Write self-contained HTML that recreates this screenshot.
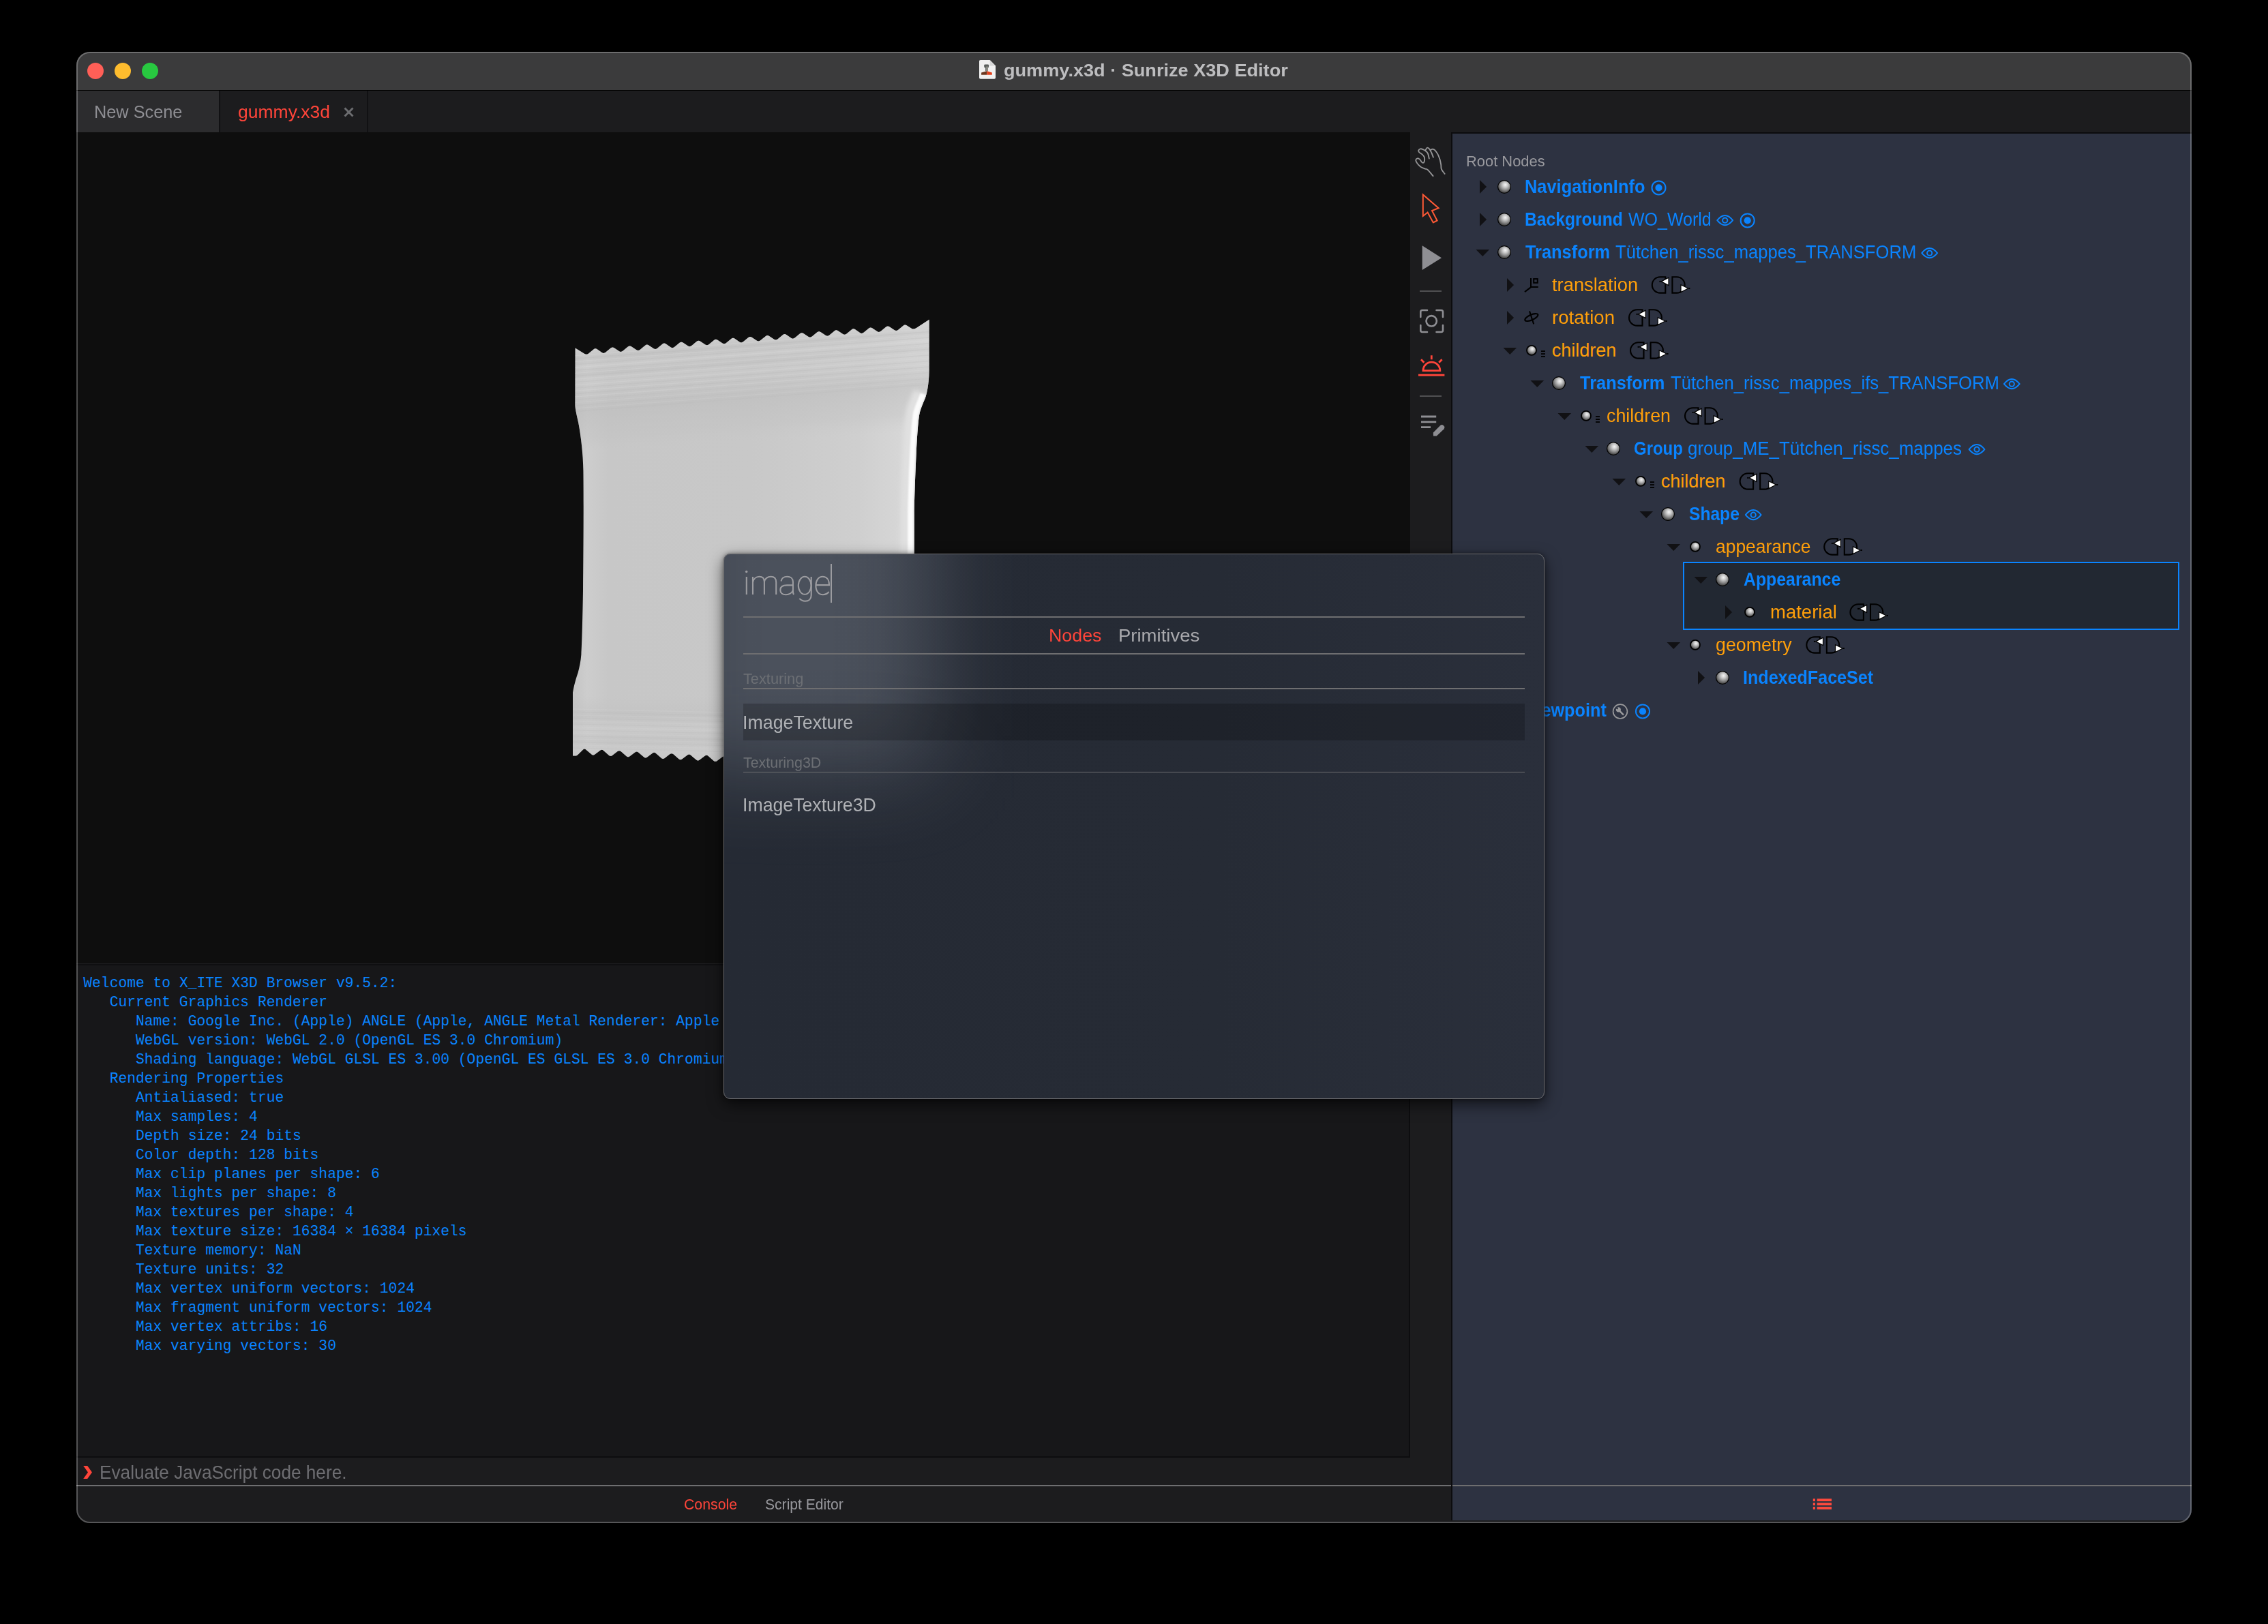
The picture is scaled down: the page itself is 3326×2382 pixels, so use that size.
<!DOCTYPE html>
<html><head><meta charset="utf-8">
<style>
html,body{margin:0;padding:0;background:#000;width:3326px;height:2382px;overflow:hidden;}
*{box-sizing:border-box;}
.a{position:absolute;display:block;}
.t{position:absolute;white-space:pre;line-height:1;}
#win{position:absolute;left:112px;top:76px;width:3102px;height:2158px;border-radius:20px;overflow:hidden;background:#1c1c1e;}
#winborder{position:absolute;left:112px;top:76px;width:3102px;height:2158px;border-radius:20px;border:2px solid rgba(255,255,255,0.26);pointer-events:none;}
</style></head><body>
<div id="win">

<div class="a" style="left:0.00px;top:0.00px;width:3102.00px;height:56.00px;background:#3b3b3c;"></div>
<div class="a" style="left:0.00px;top:56.00px;width:3102.00px;height:1.00px;background:#000;"></div>
<div class="a" style="left:15.75px;top:15.75px;width:24.50px;height:24.50px;border-radius:50%;background:#ff5f57;"></div>
<div class="a" style="left:55.75px;top:15.75px;width:24.50px;height:24.50px;border-radius:50%;background:#febc2e;"></div>
<div class="a" style="left:95.75px;top:15.75px;width:24.50px;height:24.50px;border-radius:50%;background:#28c840;"></div>
<svg class="a" style="left:1320.00px;top:8.00px;" width="32.00" height="36.00" viewBox="1432.00 84.00 32.00 36.00">
<path d="M1437.8 88 H1451.6 L1460 96.4 V113.9 A1.8 1.8 0 0 1 1458.2 115.7 H1437.8 A1.8 1.8 0 0 1 1436 113.9 V89.8 A1.8 1.8 0 0 1 1437.8 88 Z" fill="#f0f0f0"/>
<path d="M1451.6 88 V96.4 H1460 Z" fill="#d6d6d6"/>
<path d="M1443.1 95.5 Q1443.5 94.3 1445 94.4 L1449 94.4 Q1450.3 94.5 1450.2 96 L1449.8 99 L1448.8 99.4 V104.3 H1445.1 V99.4 L1443.3 98.8 Z" fill="#5c605e"/>
<rect x="1446.2" y="97.5" width="2.6" height="6.8" fill="#8e8f88"/>
<path d="M1439.1 106.6 L1447.3 104.3 V109.8 H1439.1 Z" fill="#6b3820"/>
<path d="M1447.3 104.3 L1454.8 106.6 V109.8 H1447.3 Z" fill="#e2401c"/>
</svg>
<div class="t" style="left:1359.98px;top:13.57px;font-family:'Liberation Sans',sans-serif;font-size:26.5px;font-weight:bold;color:#bdbdbf;transform:scaleX(1.0230);transform-origin:0 0;">gummy.x3d · Sunrize X3D Editor</div>
<div class="a" style="left:0.00px;top:57.00px;width:3102.00px;height:61.00px;background:#1c1c1e;"></div>
<div class="a" style="left:0.00px;top:57.00px;width:209.00px;height:61.00px;background:#2c2c2e;"></div>
<div class="a" style="left:209.00px;top:57.00px;width:1.50px;height:61.00px;background:#111113;"></div>
<div class="a" style="left:426.00px;top:57.00px;width:2.00px;height:61.00px;background:#111113;"></div>
<div class="t" style="left:25.75px;top:74.89px;font-family:'Liberation Sans',sans-serif;font-size:26px;font-weight:normal;color:#8e8e93;transform:scaleX(0.9732);transform-origin:0 0;">New Scene</div>
<div class="t" style="left:236.98px;top:74.89px;font-family:'Liberation Sans',sans-serif;font-size:26px;font-weight:normal;color:#ff453a;transform:scaleX(1.0193);transform-origin:0 0;">gummy.x3d</div>
<svg class="a" style="left:391.00px;top:80.00px;" width="17.00" height="17.00" viewBox="503.00 156.00 17.00 17.00"><path d="M505.5 158.5 L517.5 170.5 M517.5 158.5 L505.5 170.5" stroke="#6c6d70" stroke-width="2.9" stroke-linecap="butt"/></svg>
<div class="a" style="left:0.00px;top:118.00px;width:1956.00px;height:1219.00px;background:#0e0e0e;"></div>
<svg class="a" style="left:713.00px;top:379.00px;" width="555.00" height="680.00" viewBox="825.00 455.00 555.00 680.00">
<defs>
<clipPath id="bagclip"><path d="M843.60 510.40 L856.95 518.69 Q860.28 520.77 862.81 518.69 L870.38 512.47 Q872.90 510.40 875.42 512.09 L882.99 517.15 Q885.51 518.83 888.04 516.76 L895.61 510.54 Q898.13 508.47 900.65 510.15 L908.22 515.21 Q910.75 516.90 913.27 514.83 L920.84 508.61 Q923.36 506.53 925.88 508.22 L933.45 513.28 Q935.97 514.97 938.50 512.89 L946.07 506.67 Q948.59 504.60 951.11 506.29 L958.68 511.35 Q961.20 513.03 963.73 510.96 L971.30 504.74 Q973.82 502.67 976.34 504.35 L983.91 509.41 Q986.43 511.10 988.96 509.03 L996.53 502.81 Q999.05 500.73 1001.57 502.42 L1009.14 507.48 Q1011.66 509.17 1014.19 507.09 L1021.76 500.87 Q1024.28 498.80 1026.80 500.49 L1034.37 505.55 Q1036.89 507.23 1039.42 505.16 L1046.99 498.94 Q1049.51 496.87 1052.03 498.56 L1059.60 503.62 Q1062.12 505.30 1064.65 503.23 L1072.22 497.01 Q1074.74 494.94 1077.26 496.62 L1084.83 501.68 Q1087.36 503.37 1089.88 501.30 L1097.45 495.08 Q1099.97 493.00 1102.49 494.69 L1110.06 499.75 Q1112.59 501.44 1115.11 499.36 L1122.68 493.14 Q1125.20 491.07 1127.72 492.76 L1135.29 497.82 Q1137.82 499.50 1140.34 497.43 L1147.91 491.21 Q1150.43 489.14 1152.95 490.82 L1160.52 495.88 Q1163.04 497.57 1165.57 495.50 L1173.14 489.28 Q1175.66 487.20 1178.18 488.89 L1185.75 493.95 Q1188.27 495.64 1190.80 493.56 L1198.37 487.34 Q1200.89 485.27 1203.41 486.96 L1210.98 492.02 Q1213.50 493.70 1216.03 491.63 L1223.60 485.41 Q1226.12 483.34 1228.64 485.02 L1236.21 490.08 Q1238.73 491.77 1241.26 489.70 L1248.83 483.48 Q1251.35 481.40 1253.87 483.09 L1261.44 488.15 Q1263.96 489.84 1266.49 487.76 L1274.06 481.54 Q1276.58 479.47 1279.10 481.16 L1286.67 486.22 Q1289.19 487.90 1291.72 485.83 L1299.29 479.61 Q1301.81 477.54 1304.33 479.22 L1311.90 484.28 Q1314.42 485.97 1316.95 483.90 L1324.52 477.68 Q1327.04 475.60 1329.58 477.21 L1337.18 482.03 Q1339.71 483.63 1344.29 480.67 L1362.60 468.80 L1362.6 540 C1362.6 556 1361 572 1357.1 582.9 C1353.5 592 1350.5 598 1348.6 606 C1346.5 616 1345 640 1343.7 665 C1342.5 690 1341 730 1340.7 754.3 L1340.2 1098 L1340.20 1130.20 L1332.52 1132.20 Q1330.60 1132.70 1328.04 1130.48 L1320.36 1123.84 Q1317.80 1121.63 1315.24 1123.57 L1307.56 1129.41 Q1305.00 1131.35 1302.44 1129.14 L1294.76 1122.50 Q1292.20 1120.28 1289.64 1122.23 L1281.96 1128.06 Q1279.40 1130.01 1276.84 1127.80 L1269.16 1121.15 Q1266.60 1118.94 1264.04 1120.88 L1256.36 1126.72 Q1253.80 1128.67 1251.24 1126.45 L1243.56 1119.81 Q1241.00 1117.59 1238.44 1119.54 L1230.76 1125.38 Q1228.20 1127.32 1225.64 1125.11 L1217.96 1118.46 Q1215.40 1116.25 1212.84 1118.19 L1205.16 1124.03 Q1202.60 1125.98 1200.04 1123.76 L1192.36 1117.12 Q1189.80 1114.90 1187.24 1116.85 L1179.56 1122.69 Q1177.00 1124.63 1174.44 1122.42 L1166.76 1115.77 Q1164.20 1113.56 1161.64 1115.51 L1153.96 1121.34 Q1151.40 1123.29 1148.84 1121.07 L1141.16 1114.43 Q1138.60 1112.22 1136.04 1114.16 L1128.36 1120.00 Q1125.80 1121.94 1123.24 1119.73 L1115.56 1113.09 Q1113.00 1110.87 1110.44 1112.82 L1102.76 1118.65 Q1100.20 1120.60 1097.64 1118.38 L1089.96 1111.74 Q1087.40 1109.53 1084.84 1111.47 L1077.16 1117.31 Q1074.60 1119.25 1072.04 1117.04 L1064.36 1110.40 Q1061.80 1108.18 1059.24 1110.13 L1051.56 1115.96 Q1049.00 1117.91 1046.44 1115.70 L1038.76 1109.05 Q1036.20 1106.84 1033.64 1108.78 L1025.96 1114.62 Q1023.40 1116.57 1020.84 1114.35 L1013.16 1107.71 Q1010.60 1105.49 1008.04 1107.44 L1000.36 1113.28 Q997.80 1115.22 995.24 1113.01 L987.56 1106.36 Q985.00 1104.15 982.44 1106.10 L974.76 1111.93 Q972.20 1113.88 969.64 1111.66 L961.96 1105.02 Q959.40 1102.81 956.84 1104.75 L949.16 1110.59 Q946.60 1112.53 944.04 1110.32 L936.36 1103.68 Q933.80 1101.46 931.24 1103.41 L923.56 1109.24 Q921.00 1111.19 918.44 1108.97 L910.76 1102.33 Q908.20 1100.12 905.64 1102.06 L897.96 1107.90 Q895.40 1109.84 892.84 1107.63 L885.16 1100.99 Q882.60 1098.77 880.04 1100.72 L872.36 1106.55 Q869.80 1108.50 867.24 1106.29 L859.56 1099.64 Q857.00 1097.43 854.80 1099.64 L848.20 1106.29 Q846.00 1108.50 844.80 1108.50 L840.00 1108.50 L840 1016 C841 1010 843 1000 847.6 986.8 C850 978 851.6 970 852.4 960 C853.4 945 854.5 900 855 866 C855.6 800 856 733 855.4 690 C855 666 852 640 848.2 620 C846 610 843.5 600 843.4 594 Z"/></clipPath>
<linearGradient id="bagH" x1="840" y1="0" x2="1363" y2="0" gradientUnits="userSpaceOnUse">
<stop offset="0" stop-color="#c4c4c4"/><stop offset="0.04" stop-color="#cdcdcd"/><stop offset="0.1" stop-color="#c7c7c7"/><stop offset="0.5" stop-color="#c8c8c8"/>
<stop offset="0.8" stop-color="#cfcfcf"/><stop offset="0.9" stop-color="#d5d5d5"/><stop offset="1" stop-color="#dcdcdc"/>
</linearGradient>
<linearGradient id="bagTop" x1="1100" y1="478" x2="1113" y2="650" gradientUnits="userSpaceOnUse">
<stop offset="0" stop-color="#d4d4d4" stop-opacity="0.6"/>
<stop offset="0.1" stop-color="#d2d2d2" stop-opacity="0.5"/>
<stop offset="0.17" stop-color="#bfbfbf" stop-opacity="0.45"/>
<stop offset="0.24" stop-color="#cfcfcf" stop-opacity="0.45"/>
<stop offset="0.3" stop-color="#c0c0c0" stop-opacity="0.45"/>
<stop offset="0.36" stop-color="#cccccc" stop-opacity="0.45"/>
<stop offset="0.45" stop-color="#c4c4c4" stop-opacity="0.4"/>
<stop offset="0.6" stop-color="#bdbdbd" stop-opacity="0.6"/>
<stop offset="0.85" stop-color="#c2c2c2" stop-opacity="0.4"/>
<stop offset="1" stop-color="#c8c8c8" stop-opacity="0"/>
</linearGradient>
<linearGradient id="bagBot" x1="950" y1="1020" x2="950" y2="1120" gradientUnits="userSpaceOnUse">
<stop offset="0" stop-color="#c3c3c3" stop-opacity="0"/>
<stop offset="0.3" stop-color="#c1c1c1" stop-opacity="0.6"/>
<stop offset="0.5" stop-color="#cdcdcd" stop-opacity="0.5"/>
<stop offset="0.65" stop-color="#c3c3c3" stop-opacity="0.5"/>
<stop offset="0.8" stop-color="#cccccc" stop-opacity="0.6"/>
<stop offset="1" stop-color="#c6c6c6" stop-opacity="0.6"/>
</linearGradient>
<filter id="bl2" x="-200%" y="-10%" width="500%" height="120%"><feGaussianBlur stdDeviation="3"/></filter>
<filter id="bl1" x="-200%" y="-10%" width="500%" height="120%"><feGaussianBlur stdDeviation="0.8"/></filter>
</defs>
<path d="M843.60 510.40 L856.95 518.69 Q860.28 520.77 862.81 518.69 L870.38 512.47 Q872.90 510.40 875.42 512.09 L882.99 517.15 Q885.51 518.83 888.04 516.76 L895.61 510.54 Q898.13 508.47 900.65 510.15 L908.22 515.21 Q910.75 516.90 913.27 514.83 L920.84 508.61 Q923.36 506.53 925.88 508.22 L933.45 513.28 Q935.97 514.97 938.50 512.89 L946.07 506.67 Q948.59 504.60 951.11 506.29 L958.68 511.35 Q961.20 513.03 963.73 510.96 L971.30 504.74 Q973.82 502.67 976.34 504.35 L983.91 509.41 Q986.43 511.10 988.96 509.03 L996.53 502.81 Q999.05 500.73 1001.57 502.42 L1009.14 507.48 Q1011.66 509.17 1014.19 507.09 L1021.76 500.87 Q1024.28 498.80 1026.80 500.49 L1034.37 505.55 Q1036.89 507.23 1039.42 505.16 L1046.99 498.94 Q1049.51 496.87 1052.03 498.56 L1059.60 503.62 Q1062.12 505.30 1064.65 503.23 L1072.22 497.01 Q1074.74 494.94 1077.26 496.62 L1084.83 501.68 Q1087.36 503.37 1089.88 501.30 L1097.45 495.08 Q1099.97 493.00 1102.49 494.69 L1110.06 499.75 Q1112.59 501.44 1115.11 499.36 L1122.68 493.14 Q1125.20 491.07 1127.72 492.76 L1135.29 497.82 Q1137.82 499.50 1140.34 497.43 L1147.91 491.21 Q1150.43 489.14 1152.95 490.82 L1160.52 495.88 Q1163.04 497.57 1165.57 495.50 L1173.14 489.28 Q1175.66 487.20 1178.18 488.89 L1185.75 493.95 Q1188.27 495.64 1190.80 493.56 L1198.37 487.34 Q1200.89 485.27 1203.41 486.96 L1210.98 492.02 Q1213.50 493.70 1216.03 491.63 L1223.60 485.41 Q1226.12 483.34 1228.64 485.02 L1236.21 490.08 Q1238.73 491.77 1241.26 489.70 L1248.83 483.48 Q1251.35 481.40 1253.87 483.09 L1261.44 488.15 Q1263.96 489.84 1266.49 487.76 L1274.06 481.54 Q1276.58 479.47 1279.10 481.16 L1286.67 486.22 Q1289.19 487.90 1291.72 485.83 L1299.29 479.61 Q1301.81 477.54 1304.33 479.22 L1311.90 484.28 Q1314.42 485.97 1316.95 483.90 L1324.52 477.68 Q1327.04 475.60 1329.58 477.21 L1337.18 482.03 Q1339.71 483.63 1344.29 480.67 L1362.60 468.80 L1362.6 540 C1362.6 556 1361 572 1357.1 582.9 C1353.5 592 1350.5 598 1348.6 606 C1346.5 616 1345 640 1343.7 665 C1342.5 690 1341 730 1340.7 754.3 L1340.2 1098 L1340.20 1130.20 L1332.52 1132.20 Q1330.60 1132.70 1328.04 1130.48 L1320.36 1123.84 Q1317.80 1121.63 1315.24 1123.57 L1307.56 1129.41 Q1305.00 1131.35 1302.44 1129.14 L1294.76 1122.50 Q1292.20 1120.28 1289.64 1122.23 L1281.96 1128.06 Q1279.40 1130.01 1276.84 1127.80 L1269.16 1121.15 Q1266.60 1118.94 1264.04 1120.88 L1256.36 1126.72 Q1253.80 1128.67 1251.24 1126.45 L1243.56 1119.81 Q1241.00 1117.59 1238.44 1119.54 L1230.76 1125.38 Q1228.20 1127.32 1225.64 1125.11 L1217.96 1118.46 Q1215.40 1116.25 1212.84 1118.19 L1205.16 1124.03 Q1202.60 1125.98 1200.04 1123.76 L1192.36 1117.12 Q1189.80 1114.90 1187.24 1116.85 L1179.56 1122.69 Q1177.00 1124.63 1174.44 1122.42 L1166.76 1115.77 Q1164.20 1113.56 1161.64 1115.51 L1153.96 1121.34 Q1151.40 1123.29 1148.84 1121.07 L1141.16 1114.43 Q1138.60 1112.22 1136.04 1114.16 L1128.36 1120.00 Q1125.80 1121.94 1123.24 1119.73 L1115.56 1113.09 Q1113.00 1110.87 1110.44 1112.82 L1102.76 1118.65 Q1100.20 1120.60 1097.64 1118.38 L1089.96 1111.74 Q1087.40 1109.53 1084.84 1111.47 L1077.16 1117.31 Q1074.60 1119.25 1072.04 1117.04 L1064.36 1110.40 Q1061.80 1108.18 1059.24 1110.13 L1051.56 1115.96 Q1049.00 1117.91 1046.44 1115.70 L1038.76 1109.05 Q1036.20 1106.84 1033.64 1108.78 L1025.96 1114.62 Q1023.40 1116.57 1020.84 1114.35 L1013.16 1107.71 Q1010.60 1105.49 1008.04 1107.44 L1000.36 1113.28 Q997.80 1115.22 995.24 1113.01 L987.56 1106.36 Q985.00 1104.15 982.44 1106.10 L974.76 1111.93 Q972.20 1113.88 969.64 1111.66 L961.96 1105.02 Q959.40 1102.81 956.84 1104.75 L949.16 1110.59 Q946.60 1112.53 944.04 1110.32 L936.36 1103.68 Q933.80 1101.46 931.24 1103.41 L923.56 1109.24 Q921.00 1111.19 918.44 1108.97 L910.76 1102.33 Q908.20 1100.12 905.64 1102.06 L897.96 1107.90 Q895.40 1109.84 892.84 1107.63 L885.16 1100.99 Q882.60 1098.77 880.04 1100.72 L872.36 1106.55 Q869.80 1108.50 867.24 1106.29 L859.56 1099.64 Q857.00 1097.43 854.80 1099.64 L848.20 1106.29 Q846.00 1108.50 844.80 1108.50 L840.00 1108.50 L840 1016 C841 1010 843 1000 847.6 986.8 C850 978 851.6 970 852.4 960 C853.4 945 854.5 900 855 866 C855.6 800 856 733 855.4 690 C855 666 852 640 848.2 620 C846 610 843.5 600 843.4 594 Z" fill="url(#bagH)"/>
<g clip-path="url(#bagclip)">
<rect x="830" y="460" width="540" height="200" fill="url(#bagTop)"/>
<rect x="830" y="1020" width="540" height="110" fill="url(#bagBot)"/>
<path d="M840 522.0 L1365 482.0" stroke="#dadada" stroke-width="1.6" opacity="0.28"/><path d="M840 526.3 L1365 486.3" stroke="#b4b4b4" stroke-width="1.6" opacity="0.22"/><path d="M840 530.6 L1365 490.6" stroke="#dadada" stroke-width="1.6" opacity="0.28"/><path d="M840 534.9 L1365 494.9" stroke="#b4b4b4" stroke-width="1.6" opacity="0.22"/><path d="M840 539.2 L1365 499.2" stroke="#dadada" stroke-width="1.6" opacity="0.28"/><path d="M840 543.5 L1365 503.5" stroke="#b4b4b4" stroke-width="1.6" opacity="0.22"/><path d="M840 547.8 L1365 507.8" stroke="#dadada" stroke-width="1.6" opacity="0.28"/><path d="M840 552.1 L1365 512.1" stroke="#b4b4b4" stroke-width="1.6" opacity="0.22"/><path d="M840 556.4 L1365 516.4" stroke="#dadada" stroke-width="1.6" opacity="0.28"/><path d="M840 560.7 L1365 520.7" stroke="#b4b4b4" stroke-width="1.6" opacity="0.22"/><path d="M840 565.0 L1365 525.0" stroke="#dadada" stroke-width="1.6" opacity="0.28"/><path d="M840 569.3 L1365 529.3" stroke="#b4b4b4" stroke-width="1.6" opacity="0.22"/><path d="M840 573.6 L1365 533.6" stroke="#dadada" stroke-width="1.6" opacity="0.28"/><path d="M840 577.9 L1365 537.9" stroke="#b4b4b4" stroke-width="1.6" opacity="0.22"/><path d="M840 582.2 L1365 542.2" stroke="#dadada" stroke-width="1.6" opacity="0.28"/><path d="M840 586.5 L1365 546.5" stroke="#b4b4b4" stroke-width="1.6" opacity="0.13"/><path d="M840 590.8 L1365 550.8" stroke="#dadada" stroke-width="1.6" opacity="0.17"/><path d="M840 595.1 L1365 555.1" stroke="#b4b4b4" stroke-width="1.6" opacity="0.13"/><path d="M840 599.4 L1365 559.4" stroke="#dadada" stroke-width="1.6" opacity="0.17"/><path d="M840 603.7 L1365 563.7" stroke="#b4b4b4" stroke-width="1.6" opacity="0.13"/><path d="M840 1040.0 L1365 1052.0" stroke="#d6d6d6" stroke-width="1.6" opacity="0.22"/><path d="M840 1044.4 L1365 1056.4" stroke="#b6b6b6" stroke-width="1.6" opacity="0.18"/><path d="M840 1048.8 L1365 1060.8" stroke="#d6d6d6" stroke-width="1.6" opacity="0.22"/><path d="M840 1053.2 L1365 1065.2" stroke="#b6b6b6" stroke-width="1.6" opacity="0.18"/><path d="M840 1057.6 L1365 1069.6" stroke="#d6d6d6" stroke-width="1.6" opacity="0.22"/><path d="M840 1062.0 L1365 1074.0" stroke="#b6b6b6" stroke-width="1.6" opacity="0.18"/><path d="M840 1066.4 L1365 1078.4" stroke="#d6d6d6" stroke-width="1.6" opacity="0.22"/><path d="M840 1070.8 L1365 1082.8" stroke="#b6b6b6" stroke-width="1.6" opacity="0.18"/><path d="M840 1075.2 L1365 1087.2" stroke="#d6d6d6" stroke-width="1.6" opacity="0.22"/><path d="M840 1079.6 L1365 1091.6" stroke="#b6b6b6" stroke-width="1.6" opacity="0.18"/><path d="M840 1084.0 L1365 1096.0" stroke="#d6d6d6" stroke-width="1.6" opacity="0.22"/><path d="M840 1088.4 L1365 1100.4" stroke="#b6b6b6" stroke-width="1.6" opacity="0.18"/><path d="M840 1092.8 L1365 1104.8" stroke="#d6d6d6" stroke-width="1.6" opacity="0.22"/><path d="M840 1097.2 L1365 1109.2" stroke="#b6b6b6" stroke-width="1.6" opacity="0.18"/>
<path d="M1359 578 C1356 587 1351 596 1348.6 606 C1346.5 616 1345 640 1343.7 665 C1342.5 690 1341 730 1340.7 754.3 L1340.2 1120" fill="none" stroke="#e0e0e0" stroke-width="40" filter="url(#bl2)"/>
<path d="M1359 578 C1356 587 1351 596 1348.6 606 C1346.5 616 1345 640 1343.7 665 C1342.5 690 1341 730 1340.7 754.3 L1340.2 1120" transform="translate(-5.5 0)" fill="none" stroke="#fbfbfb" stroke-width="8" filter="url(#bl1)"/>
</g>
</svg>
<svg class="a" style="left:1958.00px;top:134.00px;" width="56.00" height="54.00" viewBox="2070.00 210.00 56.00 54.00"><path d="M2101.6 258.2 C2100.3 256.7 2095.9 251.0 2093.9 249.2 C2092.0 247.5 2091.6 248.2 2090.0 247.6 C2088.3 246.9 2085.9 246.2 2084.3 245.3 C2082.7 244.3 2081.5 243.1 2080.3 241.9 C2079.1 240.7 2078.0 239.2 2077.3 237.9 C2076.7 236.7 2076.1 235.6 2076.3 234.6 C2076.5 233.7 2077.7 232.4 2078.6 232.3 C2079.6 232.1 2081.0 232.8 2082.0 233.6 C2083.0 234.4 2083.8 236.4 2084.6 237.3 C2085.5 238.2 2086.3 238.9 2087.0 238.9 C2087.6 238.9 2088.3 238.5 2088.6 237.3 C2089.0 236.0 2089.3 232.9 2089.0 231.3 C2088.6 229.6 2087.9 228.6 2086.6 227.3 C2085.4 226.0 2082.4 224.4 2081.3 223.3 C2080.3 222.2 2080.0 221.5 2080.3 220.6 C2080.6 219.8 2081.8 218.5 2083.0 218.3 C2084.1 218.1 2086.0 218.8 2087.3 219.3 C2088.6 219.8 2089.5 220.4 2090.6 221.3 C2091.7 222.2 2093.1 223.1 2093.9 225.0 C2094.8 226.8 2095.5 231.3 2095.8 232.6 M2090.6 220.0 C2091.0 219.4 2092.0 216.9 2092.9 216.7 C2093.9 216.4 2095.2 217.4 2096.3 218.6 C2097.3 219.9 2098.3 222.0 2099.3 224.0 C2100.2 226.0 2101.5 229.5 2101.9 230.6 M2097.9 220.0 C2098.4 219.8 2099.9 218.6 2100.9 218.6 C2102.0 218.7 2103.0 219.1 2104.3 220.3 C2105.5 221.5 2107.0 223.4 2108.2 225.6 C2109.5 227.9 2110.7 231.3 2111.6 233.9 C2112.4 236.6 2112.8 239.2 2113.2 241.6 C2113.6 244.0 2113.0 246.0 2113.9 248.2 C2114.8 250.5 2117.8 253.8 2118.6 254.9" fill="none" stroke="#959597" stroke-width="1.85" stroke-linecap="round" stroke-linejoin="round"/></svg>
<svg class="a" style="left:1970.00px;top:205.00px;" width="32.00" height="50.00" viewBox="2082.00 281.00 32.00 50.00">
<path d="M2086.8 285.5 L2086.8 317 L2093.6 311.5 L2101.8 326.5 L2107.6 323.5 L2100 309 L2109.6 305.2 Z" fill="none" stroke="#ff5a36" stroke-width="2" stroke-linejoin="miter"/>
</svg>
<svg class="a" style="left:1972.00px;top:282.00px;" width="32.00" height="40.00" viewBox="2084.00 358.00 32.00 40.00"><path d="M2085.7 360.3 L2114 378.2 L2085.7 396 Z" fill="#8e8e93"/></svg>
<div class="a" style="left:1970.00px;top:349.80px;width:32.00px;height:2.00px;background:#505052;"></div>
<svg class="a" style="left:1968.00px;top:375.00px;" width="40.00" height="40.00" viewBox="2080.00 451.00 40.00 40.00">
<path d="M2083.3 465 V457.5 Q2083.3 455 2085.8 455 H2093 M2106.5 455 H2113.5 Q2116 455 2116 457.5 V465 M2116 477 V484.5 Q2116 487 2113.5 487 H2106.5 M2093 487 H2085.8 Q2083.3 487 2083.3 484.5 V477" fill="none" stroke="#8e8e93" stroke-width="2.6" stroke-linecap="round"/>
<circle cx="2099.2" cy="470.8" r="7.7" fill="none" stroke="#8e8e93" stroke-width="2.6"/>
</svg>
<svg class="a" style="left:1966.00px;top:442.00px;" width="44.00" height="36.00" viewBox="2078.00 518.00 44.00 36.00">
<path d="M2087 543.6 A12.3 12.3 0 0 1 2111.8 543.6 Z" fill="none" stroke="#ff453a" stroke-width="2.8" stroke-linejoin="miter"/>
<rect x="2080" y="548.7" width="38.4" height="2.9" fill="#ff453a"/>
<path d="M2099.3 521.3 V527.2 M2084 527.2 L2088.4 531.8 M2114.6 527.2 L2110.2 531.8" stroke="#ff453a" stroke-width="2.8"/>
</svg>
<div class="a" style="left:1970.00px;top:503.80px;width:32.00px;height:2.00px;background:#505052;"></div>
<svg class="a" style="left:1968.00px;top:529.00px;" width="42.00" height="39.00" viewBox="2080.00 605.00 42.00 39.00">
<path d="M2084 611 H2106.2 M2084 618.8 H2106.2 M2084 626.6 H2098" stroke="#8e8e93" stroke-width="2.8"/>
<path d="M2102 639.5 L2101.8 634.5 L2112.5 623.8 Q2114.5 622 2116.5 623.8 L2117.8 625.2 Q2119.5 627.2 2117.6 629.2 L2106.8 639.6 Z" fill="#8e8e93"/>
</svg>
<div class="a" style="left:0.00px;top:1337.00px;width:1954.00px;height:723.00px;background:#171719;"></div>
<div class="a" style="left:0.00px;top:1337.00px;width:1954.00px;height:1.00px;background:#1e1e20;"></div>
<div class="a" style="left:0.00px;top:1338.00px;width:1954.00px;height:2.00px;background:#0f0f11;"></div>
<div class="a" style="left:1954.00px;top:1337.00px;width:2.00px;height:725.00px;background:#0d0d0f;"></div>
<div class="a" style="left:0.00px;top:2060.00px;width:1956.00px;height:2.00px;background:#0d0d0f;"></div>
<div class="t" style="left:10.30px;top:1355.67px;font-family:'Liberation Mono',monospace;font-size:21.3px;color:#0a84ff;">Welcome to X_ITE X3D Browser v9.5.2:</div>
<div class="t" style="left:48.64px;top:1383.69px;font-family:'Liberation Mono',monospace;font-size:21.3px;color:#0a84ff;">Current Graphics Renderer</div>
<div class="t" style="left:86.98px;top:1411.71px;font-family:'Liberation Mono',monospace;font-size:21.3px;color:#0a84ff;">Name: Google Inc. (Apple) ANGLE (Apple, ANGLE Metal Renderer: Apple M1 Pro, Unspecified Version)</div>
<div class="t" style="left:86.98px;top:1439.73px;font-family:'Liberation Mono',monospace;font-size:21.3px;color:#0a84ff;">WebGL version: WebGL 2.0 (OpenGL ES 3.0 Chromium)</div>
<div class="t" style="left:86.98px;top:1467.75px;font-family:'Liberation Mono',monospace;font-size:21.3px;color:#0a84ff;">Shading language: WebGL GLSL ES 3.00 (OpenGL ES GLSL ES 3.0 Chromium)</div>
<div class="t" style="left:48.64px;top:1495.77px;font-family:'Liberation Mono',monospace;font-size:21.3px;color:#0a84ff;">Rendering Properties</div>
<div class="t" style="left:86.98px;top:1523.79px;font-family:'Liberation Mono',monospace;font-size:21.3px;color:#0a84ff;">Antialiased: true</div>
<div class="t" style="left:86.98px;top:1551.81px;font-family:'Liberation Mono',monospace;font-size:21.3px;color:#0a84ff;">Max samples: 4</div>
<div class="t" style="left:86.98px;top:1579.83px;font-family:'Liberation Mono',monospace;font-size:21.3px;color:#0a84ff;">Depth size: 24 bits</div>
<div class="t" style="left:86.98px;top:1607.85px;font-family:'Liberation Mono',monospace;font-size:21.3px;color:#0a84ff;">Color depth: 128 bits</div>
<div class="t" style="left:86.98px;top:1635.87px;font-family:'Liberation Mono',monospace;font-size:21.3px;color:#0a84ff;">Max clip planes per shape: 6</div>
<div class="t" style="left:86.98px;top:1663.89px;font-family:'Liberation Mono',monospace;font-size:21.3px;color:#0a84ff;">Max lights per shape: 8</div>
<div class="t" style="left:86.98px;top:1691.91px;font-family:'Liberation Mono',monospace;font-size:21.3px;color:#0a84ff;">Max textures per shape: 4</div>
<div class="t" style="left:86.98px;top:1719.93px;font-family:'Liberation Mono',monospace;font-size:21.3px;color:#0a84ff;">Max texture size: 16384 × 16384 pixels</div>
<div class="t" style="left:86.98px;top:1747.95px;font-family:'Liberation Mono',monospace;font-size:21.3px;color:#0a84ff;">Texture memory: NaN</div>
<div class="t" style="left:86.98px;top:1775.97px;font-family:'Liberation Mono',monospace;font-size:21.3px;color:#0a84ff;">Texture units: 32</div>
<div class="t" style="left:86.98px;top:1803.99px;font-family:'Liberation Mono',monospace;font-size:21.3px;color:#0a84ff;">Max vertex uniform vectors: 1024</div>
<div class="t" style="left:86.98px;top:1832.01px;font-family:'Liberation Mono',monospace;font-size:21.3px;color:#0a84ff;">Max fragment uniform vectors: 1024</div>
<div class="t" style="left:86.98px;top:1860.03px;font-family:'Liberation Mono',monospace;font-size:21.3px;color:#0a84ff;">Max vertex attribs: 16</div>
<div class="t" style="left:86.98px;top:1888.05px;font-family:'Liberation Mono',monospace;font-size:21.3px;color:#0a84ff;">Max varying vectors: 30</div>
<svg class="a" style="left:6.00px;top:2070.00px;" width="22.00" height="27.00" viewBox="118.00 2146.00 22.00 27.00"><path d="M122.2 2150 L128.2 2150 L135 2159.5 L128.2 2169 L122.2 2169 L129 2159.5 Z" fill="#ff453a"/></svg>
<div class="t" style="left:33.50px;top:2069.52px;font-family:'Liberation Sans',sans-serif;font-size:27.5px;font-weight:normal;color:#6e6e72;transform:scaleX(0.9523);transform-origin:0 0;">Evaluate JavaScript code here.</div>
<div class="a" style="left:0.00px;top:2102.00px;width:2016.00px;height:2.00px;background:#6e6e70;"></div>
<div class="t" style="left:891.31px;top:2120.70px;font-family:'Liberation Sans',sans-serif;font-size:21.5px;font-weight:normal;color:#ff453a;transform:scaleX(0.9893);transform-origin:0 0;">Console</div>
<div class="t" style="left:1009.60px;top:2120.70px;font-family:'Liberation Sans',sans-serif;font-size:21.5px;font-weight:normal;color:#98989d;transform:scaleX(0.9809);transform-origin:0 0;">Script Editor</div>
<div class="a" style="left:2016.00px;top:118.00px;width:2.00px;height:2036.00px;background:#0c0c0e;"></div>
<div class="a" style="left:2016.00px;top:118.00px;width:1086.00px;height:2.00px;background:#0c0c0e;"></div>
<div class="a" style="left:2018.00px;top:120.00px;width:1084.00px;height:2034.00px;background:#2d3241;"></div>
<div class="a" style="left:2018.00px;top:2102.00px;width:1084.00px;height:2.00px;background:#6e6e70;"></div>
<svg class="a" style="left:2543.00px;top:2119.00px;" width="35.00" height="21.00" viewBox="2655.00 2195.00 35.00 21.00">
<rect x="2658.8" y="2198.2" width="3.2" height="3.8" fill="#ff4a3d"/>
<rect x="2658.8" y="2204.2" width="3.2" height="3.8" fill="#ff4a3d"/>
<rect x="2658.8" y="2210.1" width="3.2" height="3.8" fill="#ff4a3d"/>
<rect x="2664.7" y="2198.2" width="21.3" height="3.8" fill="#ff4a3d"/>
<rect x="2664.7" y="2204.2" width="21.3" height="3.8" fill="#ff4a3d"/>
<rect x="2664.7" y="2210.1" width="21.3" height="3.8" fill="#ff4a3d"/>
</svg>
<div class="t" style="left:2038.21px;top:150.38px;font-family:'Liberation Sans',sans-serif;font-size:22px;font-weight:normal;color:#9a9a9f;transform:scaleX(0.9950);transform-origin:0 0;">Root Nodes</div>
<div class="a" style="left:2355.70px;top:748.10px;width:728.50px;height:100.10px;background:#222832;border:2px solid #0a84ff;"></div>
<div class="t" style="left:2124.26px;top:184.94px;font-family:'Liberation Sans',sans-serif;font-size:27px;font-weight:bold;color:#0a84ff;transform:scaleX(0.9408);transform-origin:0 0;">NavigationInfo</div>
<div class="t" style="left:2124.29px;top:232.94px;font-family:'Liberation Sans',sans-serif;font-size:27px;font-weight:bold;color:#0a84ff;transform:scaleX(0.9128);transform-origin:0 0;">Background</div>
<div class="t" style="left:2275.50px;top:232.94px;font-family:'Liberation Sans',sans-serif;font-size:27px;font-weight:normal;color:#0a84ff;transform:scaleX(0.9256);transform-origin:0 0;">WO_World</div>
<div class="t" style="left:2125.00px;top:280.94px;font-family:'Liberation Sans',sans-serif;font-size:27px;font-weight:bold;color:#0a84ff;transform:scaleX(0.9403);transform-origin:0 0;">Transform</div>
<div class="t" style="left:2257.00px;top:280.94px;font-family:'Liberation Sans',sans-serif;font-size:27px;font-weight:normal;color:#0a84ff;transform:scaleX(0.9486);transform-origin:0 0;">Tütchen_rissc_mappes_TRANSFORM</div>
<div class="t" style="left:2164.30px;top:328.94px;font-family:'Liberation Sans',sans-serif;font-size:27px;font-weight:normal;color:#ff9f0a;transform:scaleX(1.0125);transform-origin:0 0;">translation</div>
<div class="t" style="left:2164.48px;top:376.94px;font-family:'Liberation Sans',sans-serif;font-size:27px;font-weight:normal;color:#ff9f0a;transform:scaleX(1.0223);transform-origin:0 0;">rotation</div>
<div class="t" style="left:2163.80px;top:424.94px;font-family:'Liberation Sans',sans-serif;font-size:27px;font-weight:normal;color:#ff9f0a;">children</div>
<div class="t" style="left:2204.80px;top:472.94px;font-family:'Liberation Sans',sans-serif;font-size:27px;font-weight:bold;color:#0a84ff;transform:scaleX(0.9418);transform-origin:0 0;">Transform</div>
<div class="t" style="left:2337.60px;top:472.94px;font-family:'Liberation Sans',sans-serif;font-size:27px;font-weight:normal;color:#0a84ff;transform:scaleX(0.9500);transform-origin:0 0;">Tütchen_rissc_mappes_ifs_TRANSFORM</div>
<div class="t" style="left:2243.81px;top:520.94px;font-family:'Liberation Sans',sans-serif;font-size:27px;font-weight:normal;color:#ff9f0a;transform:scaleX(0.9942);transform-origin:0 0;">children</div>
<div class="t" style="left:2284.11px;top:568.94px;font-family:'Liberation Sans',sans-serif;font-size:27px;font-weight:bold;color:#0a84ff;transform:scaleX(0.8869);transform-origin:0 0;">Group</div>
<div class="t" style="left:2363.44px;top:568.94px;font-family:'Liberation Sans',sans-serif;font-size:27px;font-weight:normal;color:#0a84ff;transform:scaleX(0.9599);transform-origin:0 0;">group_ME_Tütchen_rissc_mappes</div>
<div class="t" style="left:2323.70px;top:616.94px;font-family:'Liberation Sans',sans-serif;font-size:27px;font-weight:normal;color:#ff9f0a;">children</div>
<div class="t" style="left:2365.20px;top:664.94px;font-family:'Liberation Sans',sans-serif;font-size:27px;font-weight:bold;color:#0a84ff;transform:scaleX(0.9110);transform-origin:0 0;">Shape</div>
<div class="t" style="left:2403.92px;top:712.94px;font-family:'Liberation Sans',sans-serif;font-size:27px;font-weight:normal;color:#ff9f0a;transform:scaleX(0.9786);transform-origin:0 0;">appearance</div>
<div class="t" style="left:2444.60px;top:760.94px;font-family:'Liberation Sans',sans-serif;font-size:27px;font-weight:bold;color:#0a84ff;transform:scaleX(0.9201);transform-origin:0 0;">Appearance</div>
<div class="t" style="left:2483.98px;top:808.94px;font-family:'Liberation Sans',sans-serif;font-size:27px;font-weight:normal;color:#ff9f0a;transform:scaleX(1.0188);transform-origin:0 0;">material</div>
<div class="t" style="left:2403.91px;top:856.94px;font-family:'Liberation Sans',sans-serif;font-size:27px;font-weight:normal;color:#ff9f0a;transform:scaleX(0.9924);transform-origin:0 0;">geometry</div>
<div class="t" style="left:2444.47px;top:904.94px;font-family:'Liberation Sans',sans-serif;font-size:27px;font-weight:bold;color:#0a84ff;transform:scaleX(0.9296);transform-origin:0 0;">IndexedFaceSet</div>
<div class="t" style="left:2125.20px;top:952.94px;font-family:'Liberation Sans',sans-serif;font-size:27px;font-weight:bold;color:#0a84ff;transform:scaleX(0.9353);transform-origin:0 0;">Viewpoint</div>
<svg class="a" style="left:2018.00px;top:120.00px;" width="1084.00" height="904.00" viewBox="2130.00 196.00 1084.00 904.00"><defs>
<radialGradient id="sph" cx="0.56" cy="0.36" r="0.62" fx="0.58" fy="0.34">
<stop offset="0" stop-color="#f6f6f6"/><stop offset="0.3" stop-color="#cccccc"/><stop offset="0.65" stop-color="#8a8a8a"/><stop offset="0.9" stop-color="#555555"/><stop offset="1" stop-color="#444444"/>
</radialGradient>
</defs>
<path d="M2170 264.0 L2180.1 274.0 L2170 283.9 Z" fill="#111114"/>
<circle cx="2206" cy="274.0" r="9.4" fill="url(#sph)" stroke="#000" stroke-width="1.2"/>
<circle cx="2432.5" cy="275.4" r="10" fill="none" stroke="#0a84ff" stroke-width="2"/>
<circle cx="2432.5" cy="275.4" r="5.1" fill="#0a84ff"/>
<path d="M2170 312.0 L2180.1 322.0 L2170 331.9 Z" fill="#111114"/>
<circle cx="2206" cy="322.0" r="9.4" fill="url(#sph)" stroke="#000" stroke-width="1.2"/>
<path d="M2518.3 323.2 Q2529.7 309.0 2541.1 323.2 Q2529.7 337.4 2518.3 323.2 Z" fill="none" stroke="#0a84ff" stroke-width="2" stroke-linejoin="round"/>
<circle cx="2529.7" cy="323.2" r="3.6" fill="none" stroke="#0a84ff" stroke-width="2"/>
<circle cx="2562.7" cy="323.4" r="10" fill="none" stroke="#0a84ff" stroke-width="2"/>
<circle cx="2562.7" cy="323.4" r="5.1" fill="#0a84ff"/>
<path d="M2164.5 365.9 L2184.1 365.9 L2174.3 375.9 Z" fill="#111114"/>
<circle cx="2206" cy="370.0" r="9.4" fill="url(#sph)" stroke="#000" stroke-width="1.2"/>
<path d="M2818.3 371.2 Q2829.7 357.0 2841.1 371.2 Q2829.7 385.4 2818.3 371.2 Z" fill="none" stroke="#0a84ff" stroke-width="2" stroke-linejoin="round"/>
<circle cx="2829.7" cy="371.2" r="3.6" fill="none" stroke="#0a84ff" stroke-width="2"/>
<path d="M2210 408.0 L2220.1 418.0 L2210 427.9 Z" fill="#111114"/>
<path d="M2245 408.1 V421.0 H2255.8 M2245.2 421.1 L2236 428.1" fill="none" stroke="#000" stroke-width="2"/>
<rect x="2249.2" y="409.1" width="5.6" height="5.7" fill="none" stroke="#000" stroke-width="2"/>
<path d="M2442.3 406.2 H2434.5 A11.7 11.7 0 0 0 2434.5 429.6 H2442.3 Z" fill="none" stroke="#000" stroke-width="2.1"/>
<path d="M2452.4 406.2 H2459.0 A11.7 11.7 0 0 1 2459.0 429.6 H2452.4 Z" fill="none" stroke="#000" stroke-width="2.1"/>
<path d="M2436.2 412.9 L2447.0 407.2 V418.6 Z" fill="#fff" stroke="#000" stroke-width="1.2"/>
<rect x="2433.4" y="411.9" width="2" height="2" fill="#000"/>
<path d="M2465.0 417.8 V428.6 L2475.8 423.0 Z" fill="#fff" stroke="#000" stroke-width="1.2"/>
<rect x="2476.4" y="422.0" width="2" height="2" fill="#000"/>
<path d="M2210 456.0 L2220.1 466.0 L2210 475.9 Z" fill="#111114"/>
<path d="M2243 456.4 L2249.2 475.4" stroke="#000" stroke-width="2"/>
<ellipse cx="2245.9" cy="465.5" rx="10.3" ry="3.9" transform="rotate(-24 2245.9 465.6)" fill="none" stroke="#000" stroke-width="2.2"/>
<path d="M2408.5 454.2 H2400.7 A11.7 11.7 0 0 0 2400.7 477.6 H2408.5 Z" fill="none" stroke="#000" stroke-width="2.1"/>
<path d="M2418.6 454.2 H2425.2 A11.7 11.7 0 0 1 2425.2 477.6 H2418.6 Z" fill="none" stroke="#000" stroke-width="2.1"/>
<path d="M2402.4 460.9 L2413.2 455.2 V466.6 Z" fill="#fff" stroke="#000" stroke-width="1.2"/>
<rect x="2399.6" y="459.9" width="2" height="2" fill="#000"/>
<path d="M2431.2 465.8 V476.6 L2442.0 471.0 Z" fill="#fff" stroke="#000" stroke-width="1.2"/>
<rect x="2442.6" y="470.0" width="2" height="2" fill="#000"/>
<path d="M2204.5 509.9 L2224.1 509.9 L2214.3 519.9 Z" fill="#111114"/>
<circle cx="2246" cy="513.9" r="7" fill="url(#sph)" stroke="#000" stroke-width="1.8"/>
<rect x="2260" y="514.2" width="6" height="1.8" fill="#000"/>
<rect x="2260" y="518.2" width="6" height="1.8" fill="#000"/>
<rect x="2260" y="522.1" width="6" height="1.8" fill="#000"/>
<path d="M2410.5 502.2 H2402.7 A11.7 11.7 0 0 0 2402.7 525.6 H2410.5 Z" fill="none" stroke="#000" stroke-width="2.1"/>
<path d="M2420.6 502.2 H2427.2 A11.7 11.7 0 0 1 2427.2 525.6 H2420.6 Z" fill="none" stroke="#000" stroke-width="2.1"/>
<path d="M2404.4 508.9 L2415.2 503.2 V514.6 Z" fill="#fff" stroke="#000" stroke-width="1.2"/>
<rect x="2401.6" y="507.9" width="2" height="2" fill="#000"/>
<path d="M2433.2 513.8 V524.6 L2444.0 519.0 Z" fill="#fff" stroke="#000" stroke-width="1.2"/>
<rect x="2444.6" y="518.0" width="2" height="2" fill="#000"/>
<path d="M2244.5 557.9 L2264.1 557.9 L2254.3 567.9 Z" fill="#111114"/>
<circle cx="2286" cy="562.0" r="9.4" fill="url(#sph)" stroke="#000" stroke-width="1.2"/>
<path d="M2938.9 563.2 Q2950.3 549.0 2961.7 563.2 Q2950.3 577.4 2938.9 563.2 Z" fill="none" stroke="#0a84ff" stroke-width="2" stroke-linejoin="round"/>
<circle cx="2950.3" cy="563.2" r="3.6" fill="none" stroke="#0a84ff" stroke-width="2"/>
<path d="M2284.5 605.9 L2304.1 605.9 L2294.3 615.9 Z" fill="#111114"/>
<circle cx="2326" cy="609.9" r="7" fill="url(#sph)" stroke="#000" stroke-width="1.8"/>
<rect x="2340" y="610.2" width="6" height="1.8" fill="#000"/>
<rect x="2340" y="614.2" width="6" height="1.8" fill="#000"/>
<rect x="2340" y="618.1" width="6" height="1.8" fill="#000"/>
<path d="M2490.5 598.2 H2482.7 A11.7 11.7 0 0 0 2482.7 621.6 H2490.5 Z" fill="none" stroke="#000" stroke-width="2.1"/>
<path d="M2500.6 598.2 H2507.2 A11.7 11.7 0 0 1 2507.2 621.6 H2500.6 Z" fill="none" stroke="#000" stroke-width="2.1"/>
<path d="M2484.4 604.9 L2495.2 599.2 V610.6 Z" fill="#fff" stroke="#000" stroke-width="1.2"/>
<rect x="2481.6" y="603.9" width="2" height="2" fill="#000"/>
<path d="M2513.2 609.8 V620.6 L2524.0 615.0 Z" fill="#fff" stroke="#000" stroke-width="1.2"/>
<rect x="2524.6" y="614.0" width="2" height="2" fill="#000"/>
<path d="M2324.5 653.9 L2344.1 653.9 L2334.3 663.9 Z" fill="#111114"/>
<circle cx="2366" cy="658.0" r="9.4" fill="url(#sph)" stroke="#000" stroke-width="1.2"/>
<path d="M2887.6 659.2 Q2899.0 645.0 2910.4 659.2 Q2899.0 673.4 2887.6 659.2 Z" fill="none" stroke="#0a84ff" stroke-width="2" stroke-linejoin="round"/>
<circle cx="2899.0" cy="659.2" r="3.6" fill="none" stroke="#0a84ff" stroke-width="2"/>
<path d="M2364.5 701.9 L2384.1 701.9 L2374.3 711.9 Z" fill="#111114"/>
<circle cx="2406" cy="705.9" r="7" fill="url(#sph)" stroke="#000" stroke-width="1.8"/>
<rect x="2420" y="706.2" width="6" height="1.8" fill="#000"/>
<rect x="2420" y="710.2" width="6" height="1.8" fill="#000"/>
<rect x="2420" y="714.1" width="6" height="1.8" fill="#000"/>
<path d="M2571.1 694.2 H2563.3 A11.7 11.7 0 0 0 2563.3 717.6 H2571.1 Z" fill="none" stroke="#000" stroke-width="2.1"/>
<path d="M2581.2 694.2 H2587.8 A11.7 11.7 0 0 1 2587.8 717.6 H2581.2 Z" fill="none" stroke="#000" stroke-width="2.1"/>
<path d="M2565.0 700.9 L2575.8 695.2 V706.6 Z" fill="#fff" stroke="#000" stroke-width="1.2"/>
<rect x="2562.2" y="699.9" width="2" height="2" fill="#000"/>
<path d="M2593.8 705.8 V716.6 L2604.6 711.0 Z" fill="#fff" stroke="#000" stroke-width="1.2"/>
<rect x="2605.2" y="710.0" width="2" height="2" fill="#000"/>
<path d="M2404.5 749.9 L2424.1 749.9 L2414.3 759.9 Z" fill="#111114"/>
<circle cx="2446" cy="754.0" r="9.4" fill="url(#sph)" stroke="#000" stroke-width="1.2"/>
<path d="M2559.8 755.2 Q2571.2 741.0 2582.6 755.2 Q2571.2 769.4 2559.8 755.2 Z" fill="none" stroke="#0a84ff" stroke-width="2" stroke-linejoin="round"/>
<circle cx="2571.2" cy="755.2" r="3.6" fill="none" stroke="#0a84ff" stroke-width="2"/>
<path d="M2444.5 797.9 L2464.1 797.9 L2454.3 807.9 Z" fill="#111114"/>
<circle cx="2486" cy="801.9" r="7" fill="url(#sph)" stroke="#000" stroke-width="1.8"/>
<path d="M2694.7 790.2 H2686.9 A11.7 11.7 0 0 0 2686.9 813.6 H2694.7 Z" fill="none" stroke="#000" stroke-width="2.1"/>
<path d="M2704.8 790.2 H2711.4 A11.7 11.7 0 0 1 2711.4 813.6 H2704.8 Z" fill="none" stroke="#000" stroke-width="2.1"/>
<path d="M2688.6 796.9 L2699.4 791.2 V802.6 Z" fill="#fff" stroke="#000" stroke-width="1.2"/>
<rect x="2685.8" y="795.9" width="2" height="2" fill="#000"/>
<path d="M2717.4 801.8 V812.6 L2728.2 807.0 Z" fill="#fff" stroke="#000" stroke-width="1.2"/>
<rect x="2728.8" y="806.0" width="2" height="2" fill="#000"/>
<path d="M2484.5 845.9 L2504.1 845.9 L2494.3 855.9 Z" fill="#111114"/>
<circle cx="2526" cy="850.0" r="9.4" fill="url(#sph)" stroke="#000" stroke-width="1.2"/>
<path d="M2530 888.0 L2540.1 898.0 L2530 907.9 Z" fill="#111114"/>
<circle cx="2566" cy="897.9" r="7" fill="url(#sph)" stroke="#000" stroke-width="1.8"/>
<path d="M2732.9 886.2 H2725.1 A11.7 11.7 0 0 0 2725.1 909.6 H2732.9 Z" fill="none" stroke="#000" stroke-width="2.1"/>
<path d="M2743.0 886.2 H2749.6 A11.7 11.7 0 0 1 2749.6 909.6 H2743.0 Z" fill="none" stroke="#000" stroke-width="2.1"/>
<path d="M2726.8 892.9 L2737.6 887.2 V898.6 Z" fill="#fff" stroke="#000" stroke-width="1.2"/>
<rect x="2724.0" y="891.9" width="2" height="2" fill="#000"/>
<path d="M2755.6 897.8 V908.6 L2766.4 903.0 Z" fill="#fff" stroke="#000" stroke-width="1.2"/>
<rect x="2767.0" y="902.0" width="2" height="2" fill="#000"/>
<path d="M2444.5 941.9 L2464.1 941.9 L2454.3 951.9 Z" fill="#111114"/>
<circle cx="2486" cy="945.9" r="7" fill="url(#sph)" stroke="#000" stroke-width="1.8"/>
<path d="M2668.8 934.2 H2661.0 A11.7 11.7 0 0 0 2661.0 957.6 H2668.8 Z" fill="none" stroke="#000" stroke-width="2.1"/>
<path d="M2678.9 934.2 H2685.5 A11.7 11.7 0 0 1 2685.5 957.6 H2678.9 Z" fill="none" stroke="#000" stroke-width="2.1"/>
<path d="M2662.7 940.9 L2673.5 935.2 V946.6 Z" fill="#fff" stroke="#000" stroke-width="1.2"/>
<rect x="2659.9" y="939.9" width="2" height="2" fill="#000"/>
<path d="M2691.5 945.8 V956.6 L2702.3 951.0 Z" fill="#fff" stroke="#000" stroke-width="1.2"/>
<rect x="2702.9" y="950.0" width="2" height="2" fill="#000"/>
<path d="M2490 984.0 L2500.1 994.0 L2490 1003.9 Z" fill="#111114"/>
<circle cx="2526" cy="994.0" r="9.4" fill="url(#sph)" stroke="#000" stroke-width="1.2"/>
<path d="M2170 1032.0 L2180.1 1042.0 L2170 1051.9 Z" fill="#111114"/>
<circle cx="2206" cy="1042.0" r="9.4" fill="url(#sph)" stroke="#000" stroke-width="1.2"/>
<circle cx="2376.0" cy="1043.6" r="10.4" fill="none" stroke="#9a9a9c" stroke-width="1.7"/>
<path d="M2373.0 1040.6 L2381.0 1048.6" stroke="#9a9a9c" stroke-width="2.4"/>
<path d="M2370.0 1039.6 A3.6 3.6 0 1 0 2372.0 1037.6 L2373.0 1039.8 L2372.2 1040.6 Z" fill="#9a9a9c"/>
<circle cx="2409.0" cy="1043.4" r="10" fill="none" stroke="#0a84ff" stroke-width="2"/>
<circle cx="2409.0" cy="1043.4" r="5.1" fill="#0a84ff"/></svg>
<div class="a" style="left:949px;top:736px;width:1204px;height:800px;border-radius:10px;box-shadow:0 8px 22px rgba(0,0,0,0.6), 0 0 6px rgba(0,0,0,0.4);"></div>
<div class="a" style="left:949px;top:736px;width:1204px;height:800px;border-radius:10px;overflow:hidden;background:linear-gradient(90deg,#252a34 0%,#262b35 60%,#2a2f3b 100%);">
<div class="a" style="left:-86px;top:-132px;width:390px;height:445px;background:rgba(215,225,240,0.21);filter:blur(68px);"></div>
<svg class="a" style="left:24.00px;top:18.00px;" width="140.00" height="56.00" viewBox="1085.00 830.00 140.00 56.00">
<g fill="none" stroke="#9c9ca0" stroke-width="2.1" stroke-linecap="butt">
<path d="M1094.8 846.1 V871.9"/>
<path d="M1104 846.1 V871.9 M1104 853.9 C1105 849.5 1108.5 845.7 1113.5 845.7 C1118.5 845.7 1120.9 848.5 1120.9 853.2 V871.9 M1120.9 853.2 C1121.5 849 1125.5 845.7 1130.4 845.7 C1135.5 845.7 1138.2 848.8 1138.2 853.9 V871.9"/>
<path d="M1145.5 852.5 C1146 848.5 1149.5 845.7 1154.4 845.7 C1159.5 845.7 1162.9 848.5 1162.9 853.2 V867.5 C1162.9 869.5 1163.3 871 1164.2 871.9 M1162.9 858.4 H1154 C1148 858.4 1144.3 861 1144.3 865.4 C1144.3 869.5 1147.5 872.2 1152.5 872.2 C1157.5 872.2 1161.5 869.3 1162.9 865.9"/>
<ellipse cx="1180.2" cy="858.8" rx="9.4" ry="13"/>
<path d="M1189.7 846.1 V873 C1189.7 878.5 1186 881.7 1180.8 881.7 C1177.5 881.7 1174.5 880.3 1172.3 877.9"/>
<path d="M1197.2 858.1 H1216 C1216 850.5 1212.5 845.7 1206.4 845.7 C1200.5 845.7 1196.4 851 1196.4 859 C1196.4 867 1200.5 872.2 1206.8 872.2 C1210.8 872.2 1213.6 870.5 1215.5 868"/>
</g>
<circle cx="1094.7" cy="838.6" r="1.75" fill="#9c9ca0"/>
</svg>
<div class="a" style="left:157.00px;top:15.00px;width:2.20px;height:56.80px;background:#9c9ca0;"></div>
<div class="a" style="left:29.00px;top:92.00px;width:1146.00px;height:1.80px;background:#6e6e70;"></div>
<div class="t" style="left:476.54px;top:106.99px;font-family:'Liberation Sans',sans-serif;font-size:26px;font-weight:normal;color:#ff453a;transform:scaleX(1.0307);transform-origin:0 0;">Nodes</div>
<div class="t" style="left:579.48px;top:106.99px;font-family:'Liberation Sans',sans-serif;font-size:26px;font-weight:normal;color:#a9a9ad;transform:scaleX(1.0581);transform-origin:0 0;">Primitives</div>
<div class="a" style="left:29.00px;top:146.00px;width:1146.00px;height:1.80px;background:#6e6e70;"></div>
<div class="t" style="left:29.00px;top:173.28px;font-family:'Liberation Sans',sans-serif;font-size:22px;font-weight:normal;color:#6c6f74;transform:scaleX(0.9883);transform-origin:0 0;">Texturing</div>
<div class="a" style="left:29.00px;top:197.00px;width:1146.00px;height:1.80px;background:#6e6e70;"></div>
<div class="a" style="left:29.00px;top:220.00px;width:1146.00px;height:53.70px;background:rgba(0,0,0,0.2);"></div>
<div class="t" style="left:28.05px;top:233.52px;font-family:'Liberation Sans',sans-serif;font-size:27.5px;font-weight:normal;color:#b0b2b6;transform:scaleX(0.9737);transform-origin:0 0;">ImageTexture</div>
<div class="t" style="left:29.00px;top:295.68px;font-family:'Liberation Sans',sans-serif;font-size:22px;font-weight:normal;color:#6c6f74;transform:scaleX(0.9734);transform-origin:0 0;">Texturing3D</div>
<div class="a" style="left:29.00px;top:319.50px;width:1146.00px;height:1.80px;background:#6e6e70;"></div>
<div class="t" style="left:27.56px;top:354.52px;font-family:'Liberation Sans',sans-serif;font-size:27.5px;font-weight:normal;color:#b0b2b6;transform:scaleX(0.9703);transform-origin:0 0;">ImageTexture3D</div>
</div>
<div class="a" style="left:949px;top:736px;width:1204px;height:800px;border-radius:10px;border:1.8px solid #6d6d70;"></div>
</div>
<div id="winborder"></div>
</body></html>
